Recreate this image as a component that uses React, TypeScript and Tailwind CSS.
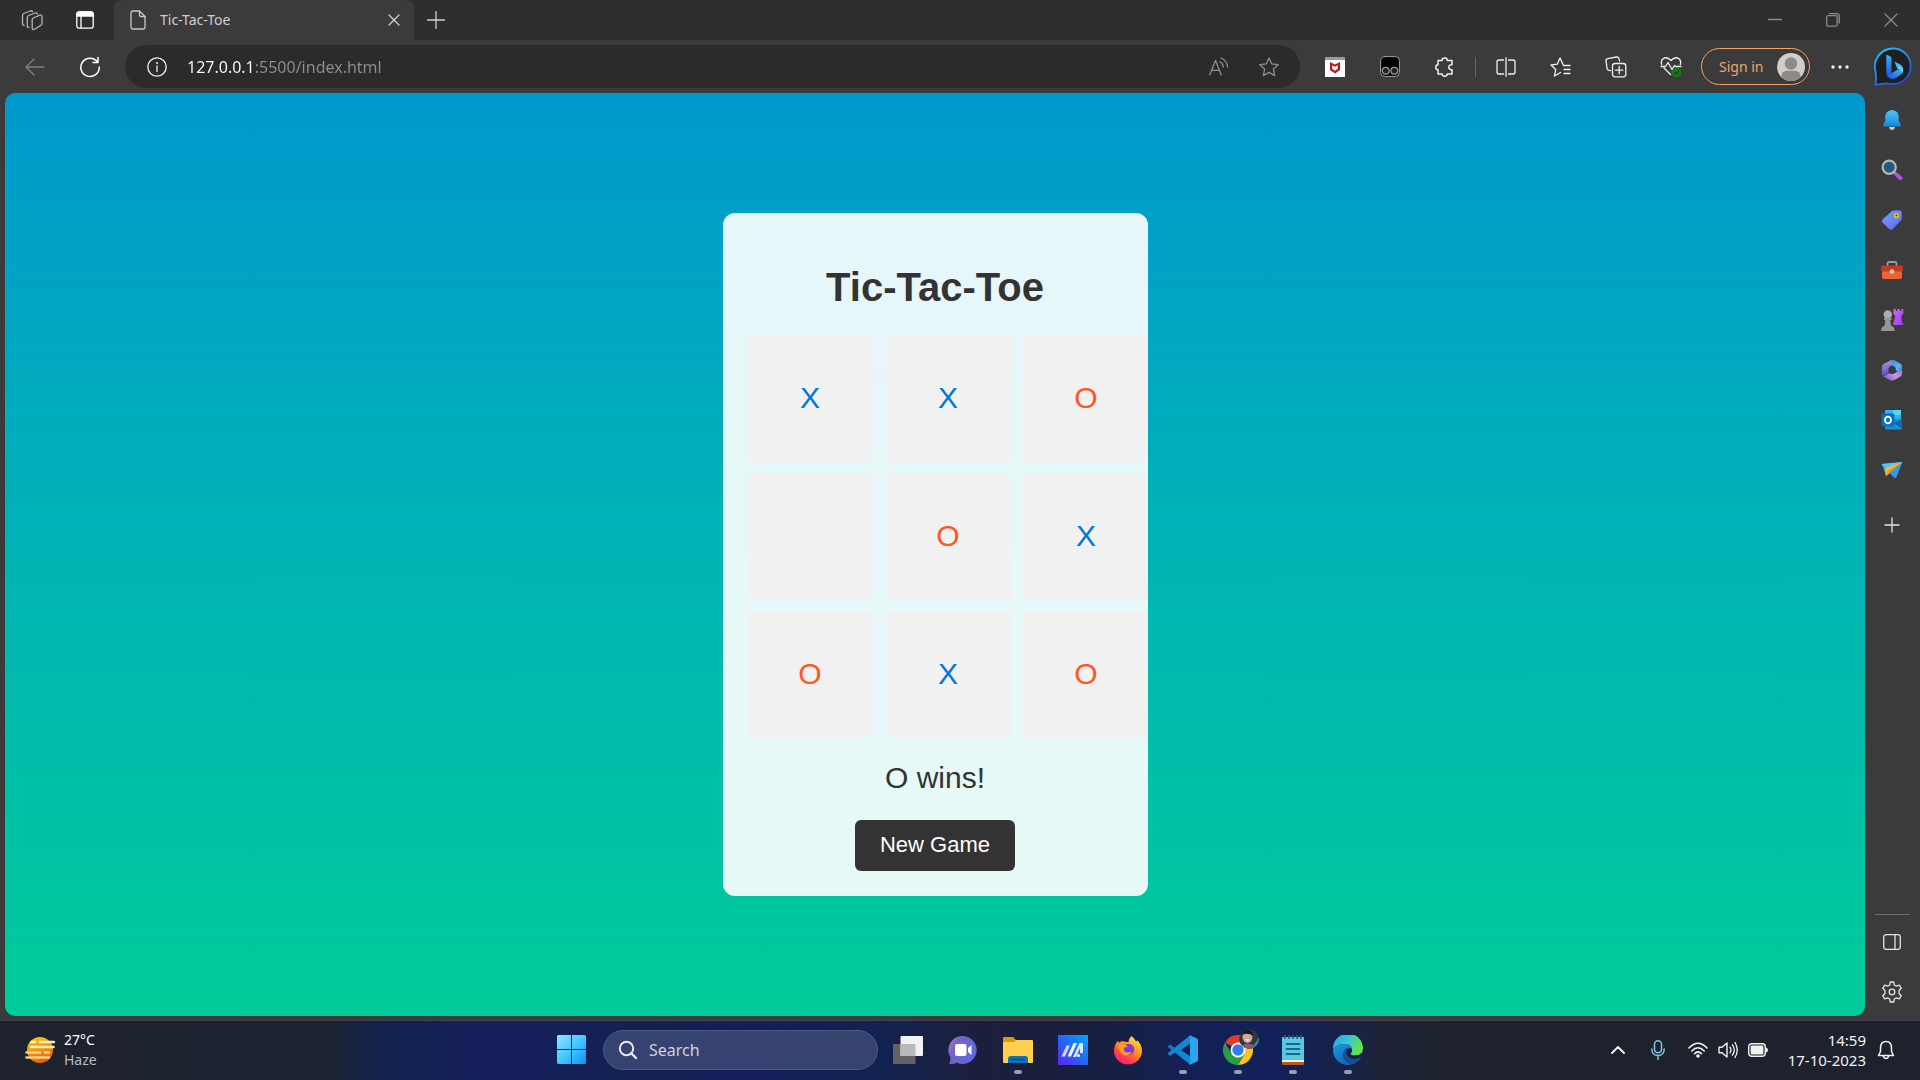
import { useState } from "react";
import type { ReactNode } from "react";

type Mark = "X" | "O" | "";

const LINES = [
  [0, 1, 2], [3, 4, 5], [6, 7, 8],
  [0, 3, 6], [1, 4, 7], [2, 5, 8],
  [0, 4, 8], [2, 4, 6],
];

const START: Mark[] = ["X", "X", "O", "", "O", "X", "O", "X", "O"];

function winnerOf(board: Mark[]): Mark {
  for (const [a, b, c] of LINES) {
    if (board[a] && board[a] === board[b] && board[a] === board[c]) return board[a];
  }
  return "";
}

type IconProps = { w?: number; h?: number; box?: string; children: ReactNode; className?: string };

function Icon({ w = 20, h = 20, box, children, className = "" }: IconProps) {
  return (
    <svg
      width={w}
      height={h}
      viewBox={box ?? `0 0 ${w} ${h}`}
      fill="none"
      stroke="currentColor"
      strokeWidth="1.3"
      strokeLinecap="round"
      strokeLinejoin="round"
      aria-hidden="true"
      className={`block shrink-0 ${className}`}
    >
      {children}
    </svg>
  );
}

function ToolButton({ label, children, className = "" }: { label: string; children: ReactNode; className?: string }) {
  return (
    <button type="button" aria-label={label} className={`flex h-10 w-[55px] shrink-0 items-center justify-center ${className}`}>
      {children}
    </button>
  );
}

/* ---------- Browser title bar ---------- */

function TitleBar() {
  return (
    <header className="flex h-10 items-stretch bg-[#2e2e2e] text-[#d0d0d0]">
      <div className="flex w-[114px] shrink-0 items-center">
        <button type="button" aria-label="Workspaces" className="flex h-full w-16 items-center justify-center text-[#b4b4b4]">
          <Icon w={22} h={22}>
            <path d="M12.200 9 19 6.200Q21 5.600 21 7.600V14.500Q21 15.700 20 16.200L13.500 20.200Q11.200 21.300 11.200 19.200V10.800Q11.200 9.500 12.200 9Z" />
            <path d="M8 18.200Q6.300 18.800 6.300 17V8.500Q6.300 7 7.500 6.500L14 4Q16 3.400 16.500 5" />
            <path d="M3.200 16.400Q1.500 16.400 1.500 14.800V6.500Q1.500 5 2.800 4.500L9 2Q11 1.300 11.500 2.700" />
          </Icon>
        </button>
        <button type="button" aria-label="Tab actions menu" className="flex h-full w-[42px] items-center justify-center text-white">
          <Icon w={18} h={18}>
            <rect x="0.800" y="0.800" width="16.400" height="16.400" rx="2.500" />
            <path d="M1 5V3Q1 1 3 1H15Q17 1 17 3V5Z" fill="currentColor" />
            <path d="M5 5V17" />
          </Icon>
        </button>
      </div>
      <div className="flex w-[300px] shrink-0 items-center rounded-t-lg bg-[#3b3b3b] pr-2 pl-4">
        <Icon w={16} h={20} className="text-[#c9c9c9]">
          <path d="M1 3Q1 1 3 1H9.500L15 6.500V17Q15 19 13 19H3Q1 19 1 17Z" />
          <path d="M9.500 1V5Q9.500 6.500 11 6.500H15" />
        </Icon>
        <span className="ml-[14px] flex-1 text-[14px] leading-5 text-[#cfcfcf]">Tic-Tac-Toe</span>
        <button type="button" aria-label="Close tab" className="flex h-6 w-6 items-center justify-center">
          <Icon w={12} h={12}>
            <path d="M1 1 11 11M11 1 1 11" />
          </Icon>
        </button>
      </div>
      <button type="button" aria-label="New tab" className="flex w-[43px] items-center justify-center">
        <Icon w={18} h={18}>
          <path d="M9 0.500V17.500M0.500 9H17.500" />
        </Icon>
      </button>
      <div className="flex flex-1 justify-end text-[#8a8a8a]">
        <button type="button" aria-label="Minimize" className="flex w-[58px] items-center justify-center">
          <Icon w={14} h={14}><path d="M0.500 6.500H13.500" /></Icon>
        </button>
        <button type="button" aria-label="Restore" className="flex w-[58px] items-center justify-center">
          <Icon w={14} h={14}>
            <rect x="0.700" y="2.700" width="10.500" height="10.500" rx="1.500" />
            <path d="M3.500 0.700H10.500Q13.300 0.700 13.300 3.500V10" />
          </Icon>
        </button>
        <button type="button" aria-label="Close" className="flex w-[58px] items-center justify-center">
          <Icon w={14} h={14}><path d="M1 1 13 13M13 1 1 13" /></Icon>
        </button>
      </div>
    </header>
  );
}

/* ---------- Browser toolbar ---------- */

function BingLogo() {
  return (
    <Icon w={38} h={40}>
      <defs>
        <linearGradient id="bingRing" x1="0" y1="0" x2="0.600" y2="1">
          <stop offset="0" stopColor="#25c9f2" />
          <stop offset="0.500" stopColor="#2a8cf0" />
          <stop offset="1" stopColor="#2050d8" />
        </linearGradient>
        <linearGradient id="bingStem" x1="0" y1="0" x2="0" y2="1">
          <stop offset="0" stopColor="#38b4f4" />
          <stop offset="1" stopColor="#2450e4" />
        </linearGradient>
        <linearGradient id="bingBowl" x1="0" y1="0" x2="1" y2="1">
          <stop offset="0" stopColor="#2ea4f4" />
          <stop offset="1" stopColor="#5ff0e0" />
        </linearGradient>
        <linearGradient id="bingBase" x1="0" y1="1" x2="1" y2="0">
          <stop offset="0" stopColor="#2450e4" />
          <stop offset="1" stopColor="#3ab4f8" />
        </linearGradient>
      </defs>
      <path d="M19 1.500C28.800 1.500 36.700 9.300 36.700 19.200S28.800 37 19 37C15.500 37 12 36 9.500 36.600C6.500 37.200 4 37.600 1.300 37.600C2.500 34 2 29 1.600 24.500A18 18 0 0 1 19 1.500Z" fill="#1f1f22" stroke="url(#bingRing)" strokeWidth="1.800" />
      <path d="M12.300 7.500 16.500 9.500Q17.500 10 17.500 11.500V25.500L14 29.500Q12.300 28.500 12.300 26.500Z" fill="url(#bingStem)" stroke="none" />
      <path d="M20.300 14.500 25.500 17Q29.800 19.500 29 24Q28.500 26 28 26.500Q27.500 23.500 23.500 22L20.300 14.500Z" fill="url(#bingBowl)" stroke="none" />
      <path d="M13.300 29 23.500 22.500Q28.500 23.500 28 26.500Q24 30.200 19.500 31.800Q15.500 32.500 13.300 29Z" fill="url(#bingBase)" stroke="none" />
    </Icon>
  );
}

function Toolbar() {
  return (
    <nav aria-label="Browser toolbar" className="flex h-[53px] items-center bg-[#3b3b3b] pl-[7px] text-[#f0f0f0]">
      <ToolButton label="Back" className="text-[#808080]">
        <Icon w={20} h={18}><path d="M19 9H1M9 1 1 9 9 17" /></Icon>
      </ToolButton>
      <ToolButton label="Refresh">
        <Icon w={22} h={22} className="text-white">
          <path d="M18.500 6A9.200 9.200 0 1 0 20.200 11" strokeWidth="1.500" />
          <path d="M19 1.500V6.500H14" strokeWidth="1.500" />
        </Icon>
      </ToolButton>
      <div className="ml-2 flex h-[43px] min-w-0 flex-1 items-center rounded-full bg-[#2b2b2b] pr-[21px] pl-[22px]">
        <button type="button" aria-label="View site information">
          <Icon w={20} h={20}>
            <circle cx="10" cy="10" r="9.200" />
            <path d="M10 9V14.500" />
            <circle cx="10" cy="6" r="0.700" fill="currentColor" strokeWidth="0.600" />
          </Icon>
        </button>
        <input
          type="text"
          aria-label="Address"
          defaultValue="127.0.0.1:5500/index.html"
          className="ml-5 h-7 min-w-0 flex-1 bg-[linear-gradient(90deg,#ffffff_67px,#8f8f8f_67px)] bg-clip-text text-[16px] text-transparent outline-none"
        />
        <button type="button" aria-label="Read aloud" className="text-[#8e8e8e]">
          <Icon w={20} h={20}>
            <path d="M0.700 18 6.500 3.500 12.300 18M2.700 13.300H10.300" />
            <path d="M11 4.500Q14 6.500 14.300 10M12 1Q18 3.500 18.700 10" />
          </Icon>
        </button>
        <button type="button" aria-label="Add to favorites" className="ml-[30px] text-[#8e8e8e]">
          <Icon w={20} h={20}>
            <path d="M10 1 12.700 6.900 19.200 7.700 14.400 12.100 15.700 18.600 10 15.400 4.300 18.600 5.600 12.100 0.800 7.700 7.300 6.900Z" />
          </Icon>
        </button>
      </div>
      <ToolButton label="McAfee" className="ml-[7px]">
        <Icon w={20} h={20}>
          <rect width="20" height="20" fill="#fff" stroke="none" />
          <rect width="20" height="3" fill="#9c9c9c" stroke="none" />
          <path d="M5 5 10 7.500 15 5V13L10 16.500 5 13ZM7.200 8.300V11.800L10 13.700 12.800 11.800V8.300L10 9.700Z" fill="#c3161c" fillRule="evenodd" stroke="none" />
        </Icon>
      </ToolButton>
      <ToolButton label="Tampermonkey">
        <Icon w={20} h={21}>
          <rect x="0.600" y="0.600" width="18.800" height="19.800" rx="4" fill="#000" stroke="#a0a0a0" strokeWidth="1" />
          <circle cx="5.700" cy="14.800" r="3.400" fill="#222" stroke="#999" />
          <circle cx="14.300" cy="14.800" r="3.400" fill="#222" stroke="#999" />
        </Icon>
      </ToolButton>
      <ToolButton label="Extensions">
        <Icon w={20} h={20}>
          <path d="M3 3.500H7.200Q7 1 9.700 1T12.200 3.500H17V7.700Q13.800 7.500 13.800 10.200T17 12.700V17H12.200Q12.200 19.300 9.700 19.300T7.200 17H3V12.700Q0.800 12.700 0.800 10.200T3 7.700Z" strokeWidth="1.500" />
        </Icon>
      </ToolButton>
      <span className="mr-0.5 ml-[3px] h-5 w-px shrink-0 bg-[#666]" />
      <ToolButton label="Split screen">
        <Icon w={20} h={20}>
          <path d="M7.500 3H3Q1 3 1 5V15Q1 17 3 17H7.500M12.500 3H17Q19 3 19 5V15Q19 17 17 17H12.500M10 0.700V19.300" />
        </Icon>
      </ToolButton>
      <ToolButton label="Favorites">
        <Icon w={21} h={20}>
          <path d="M20 8.500H13.500L10 1 7.300 7.200 1 8 5.700 12.500 4.500 19 10.500 15.500M14 12.500H20M14 16.500H20" />
        </Icon>
      </ToolButton>
      <ToolButton label="Collections">
        <Icon w={22} h={22}>
          <path d="M5.500 14.700 3.500 14.200Q2 13.500 2 12L1 5Q0.800 3 2.700 2.600L11.500 1Q13.500 0.800 14 2.700L14.600 5" />
          <rect x="7.500" y="7.500" width="13.300" height="13.300" rx="2.500" />
          <path d="M14.200 10.500V17.800M10.500 14.200H17.800" />
        </Icon>
      </ToolButton>
      <ToolButton label="Browser essentials">
        <Icon w={22} h={22}>
          <path d="M1.700 8.500Q0.500 5 3 2.800Q7 0 11 4.500Q15 0 19 2.800Q21.500 5 20.300 8.500M4 12 10.500 18.500M1 10.500H5.500L8 6.500 12 13.500 14.500 9.500 15.500 10.500H21" />
          <circle cx="16.500" cy="16.500" r="4.800" fill="#107c10" stroke="none" />
          <path d="M14.500 16.600 16 18 18.600 15.200" stroke="#1f3d1f" />
        </Icon>
      </ToolButton>
      <button type="button" className="ml-[3px] flex h-[37px] w-[109px] shrink-0 items-center justify-between rounded-full border border-[#f0a36b] pr-1 pl-[17px] text-[#f0a36b]">
        <span className="text-[14px] leading-5 whitespace-nowrap">Sign in</span>
        <Icon w={28} h={28}>
          <circle cx="14" cy="14" r="14" fill="#d0cecb" stroke="none" />
          <circle cx="14" cy="10.500" r="6.200" fill="#8e8a86" stroke="none" />
          <path d="M4.200 24Q5 17.800 10 17.800H18Q23 17.800 23.800 24A14 14 0 0 1 4.200 24Z" fill="#8e8a86" stroke="none" />
        </Icon>
      </button>
      <ToolButton label="Settings and more" className="pl-[5px]">
        <Icon w={18} h={4}>
          <circle cx="2" cy="2" r="1.700" fill="currentColor" stroke="none" />
          <circle cx="9" cy="2" r="1.700" fill="currentColor" stroke="none" />
          <circle cx="16" cy="2" r="1.700" fill="currentColor" stroke="none" />
        </Icon>
      </ToolButton>
      <ToolButton label="Bing Chat"><BingLogo /></ToolButton>
    </nav>
  );
}

/* ---------- Game ---------- */

function Game() {
  const [board, setBoard] = useState<Mark[]>(START);
  const winner = winnerOf(board);
  const turn: Mark = board.filter(Boolean).length % 2 === 0 ? "O" : "X";
  const status = winner ? `${winner} wins!` : board.every(Boolean) ? "Draw!" : `${turn}'s turn`;

  const play = (i: number) => {
    if (winner || board[i]) return;
    setBoard(board.map((m, k) => (k === i ? turn : m)));
  };

  return (
    <main className="mb-1 flex flex-1 items-center justify-center overflow-hidden rounded-[10px] bg-linear-to-b from-[#0099cc] to-[#00cc99] font-['Liberation_Sans',Arial,sans-serif]">
      <section className="flex w-[425px] flex-col items-center overflow-hidden rounded-xl bg-white/90 px-[25px] pt-[51px] pb-[25px] text-[#333]">
        <h1 className="text-[40px] leading-[46px] font-bold">Tic-Tac-Toe</h1>
        <div className="mt-[26px] grid grid-cols-[repeat(3,125px)] gap-[13px] self-start">
          {board.map((mark, i) => (
            <button
              key={i}
              type="button"
              aria-label={`Cell ${i + 1} ${mark}`}
              onClick={() => play(i)}
              className={`flex h-[125px] items-center justify-center bg-[#f1f1f1] pb-0.5 text-[30px] leading-[34px] ${mark === "X" ? "text-[#0078d4]" : "text-[#ff5722]"}`}
            >
              {mark}
            </button>
          ))}
        </div>
        <p className="mt-6 text-[30px] leading-[34px]" role="status">{status}</p>
        <button
          type="button"
          onClick={() => setBoard(Array<Mark>(9).fill(""))}
          className="mt-[25px] h-[51px] rounded-md bg-[#333] px-[25px] pb-0.5 text-[22px] leading-[26px] whitespace-nowrap text-white"
        >
          New Game
        </button>
      </section>
    </main>
  );
}

/* ---------- Edge sidebar ---------- */

function SideButton({ label, children }: { label: string; children: ReactNode }) {
  return (
    <button type="button" aria-label={label} className="flex h-[50px] w-full items-center justify-center">
      {children}
    </button>
  );
}

function Sidebar() {
  return (
    <aside aria-label="Sidebar" className="flex w-[55px] shrink-0 flex-col items-center pt-0.5 pr-px pb-[3px] text-[#e4e4e4]">
      <SideButton label="Notifications">
        <Icon w={22} h={22}>
          <defs>
            <linearGradient id="bell" x1="0" y1="0" x2="0" y2="1"><stop offset="0" stopColor="#4cc6fa" /><stop offset="1" stopColor="#1687d9" /></linearGradient>
          </defs>
          <path d="M8 18H14Q13.500 21 11 21T8 18Z" fill="#c8c8c8" stroke="none" />
          <path d="M11 1Q17.500 1.500 17.800 8V12L20 16Q20 17.500 18.500 17.500H3.500Q2 17.500 2 16L4.200 12V8Q4.500 1.500 11 1Z" fill="url(#bell)" stroke="none" />
        </Icon>
      </SideButton>
      <SideButton label="Search">
        <Icon w={22} h={22}>
          <path d="M12.500 12.500 15.500 15.500" stroke="#999" strokeWidth="2.500" />
          <path d="M15.500 15.500 19.500 19.200" stroke="#b34cf0" strokeWidth="4" />
          <circle cx="8.200" cy="8.200" r="6.600" fill="#245b7c" stroke="#b5b5b5" strokeWidth="2.200" />
        </Icon>
      </SideButton>
      <SideButton label="Shopping">
        <Icon w={22} h={22}>
          <defs>
            <linearGradient id="tag" x1="0" y1="0" x2="1" y2="1"><stop offset="0" stopColor="#74a5ff" /><stop offset="1" stopColor="#5d68e8" /></linearGradient>
          </defs>
          <path d="M12.500 1.500H19Q20.800 1.500 20.800 3.500V9.500Q20.800 10.500 20 11.300L11.500 20.300Q10 21.700 8.500 20.300L1.500 13.500Q0.300 12 1.600 10.500L10.500 2.400Q11.300 1.500 12.500 1.500Z" fill="url(#tag)" stroke="none" />
          <circle cx="15.500" cy="6.500" r="1.800" fill="#333" stroke="#fdc600" strokeWidth="1.600" />
        </Icon>
      </SideButton>
      <SideButton label="Tools">
        <Icon w={24} h={22}>
          <path d="M7.500 7V4.500Q7.500 3 9 3H15Q16.500 3 16.500 4.500V7" stroke="#9b9b9b" strokeWidth="1.800" />
          <path d="M2 11H22V18Q22 20 20 20H4Q2 20 2 18Z" fill="#ee6237" stroke="none" />
          <path d="M2.500 6.500H21.500Q23 6.500 23 8V10Q23 12.500 20.500 12.500H3.500Q1 12.500 1 10V8Q1 6.500 2.500 6.500Z" fill="#c63d1c" stroke="none" />
          <circle cx="12" cy="12.500" r="2.300" fill="#c9c9c9" stroke="none" />
        </Icon>
      </SideButton>
      <SideButton label="Games">
        <Icon w={24} h={24}>
          <defs>
            <linearGradient id="rook" x1="0" y1="0" x2="1" y2="1"><stop offset="0" stopColor="#d56bff" /><stop offset="1" stopColor="#9a35e8" /></linearGradient>
          </defs>
          <path d="M13.500 1H15.800V3H17.300V1H19.700V3H21.200V1H23.300V6L21.300 8 22 13.500 23.500 17H13L15.300 8 13.500 6Z" fill="url(#rook)" stroke="none" />
          <circle cx="7.800" cy="6.500" r="4.200" fill="#adadad" stroke="none" />
          <path d="M4 10H11.600V12H10.300L11 17.500Q14.700 19 14.700 22.500V23H1V22.500Q1 19 4.600 17.500L5.300 12H4Z" fill="#969696" stroke="none" />
        </Icon>
      </SideButton>
      <SideButton label="Microsoft 365">
        <Icon w={22} h={22}>
          <defs>
            <linearGradient id="mLeft" x1="0.300" y1="0" x2="0.500" y2="1"><stop offset="0" stopColor="#b09be8" /><stop offset="1" stopColor="#4a53b0" /></linearGradient>
            <linearGradient id="mRight" x1="0" y1="0" x2="1" y2="1"><stop offset="0" stopColor="#3f86d8" /><stop offset="0.600" stopColor="#56b8ec" /><stop offset="1" stopColor="#2f6cc0" /></linearGradient>
            <linearGradient id="mBase" x1="0" y1="0.500" x2="1" y2="0"><stop offset="0" stopColor="#7d64c0" /><stop offset="0.500" stopColor="#c79ae0" /><stop offset="1" stopColor="#8a78d0" /></linearGradient>
          </defs>
          <path d="M11 0.700 3 4.800Q0.800 6 0.800 8.500V14.500Q0.800 17.500 3.500 16.500L7.700 14V9.500Q7.700 8 9 7.200L12.500 5Z" fill="url(#mLeft)" stroke="none" />
          <path d="M11 0.700Q12 0.500 13 1L19.500 4.700Q21.200 5.800 21.200 8V13Q20.500 15 18.500 13.500L14.500 11V9.500Q14.500 8 13.300 7.300L10 6.500Q12.500 4 11 0.700Z" fill="url(#mRight)" stroke="none" />
          <path d="M1.500 16.800Q4 17.500 7.700 14.500L10.500 15Q11.500 15.500 12.800 14.700L18 11.500Q20.500 10.500 21.200 13V14.500Q21.200 16.500 19.500 17.500L13 21.200Q11 22 9.200 21.200L3 18Q2 17.500 1.500 16.800Z" fill="url(#mBase)" stroke="none" />
          <path d="M11.100 7.200 14.500 9.200V13L11.100 15 7.700 13V9.200Z" fill="#38384a" stroke="none" />
        </Icon>
      </SideButton>
      <SideButton label="Outlook">
        <Icon w={22} h={22}>
          <path d="M4 1H20V12H4Z" fill="#34b5ea" stroke="none" />
          <path d="M12 1H20V6H12Z" fill="#52d6f5" stroke="none" />
          <path d="M4 10 21 9.500V19Q21 20.500 19.500 20.500H5.500Q4 20.500 4 19Z" fill="#1c8fd8" stroke="none" />
          <path d="M21 10V19.500L13 14Z" fill="#1265a6" stroke="none" />
          <rect x="0.500" y="4.500" width="13" height="13" rx="1.500" fill="#0a6fc2" stroke="none" />
          <ellipse cx="7" cy="11" rx="3" ry="3.400" stroke="#fff" strokeWidth="1.900" />
        </Icon>
      </SideButton>
      <SideButton label="Drop">
        <Icon w={22} h={20}>
          <path d="M0.500 4 21.500 2 15.500 17Q14.500 18.500 13 17.500L9 13.500 5 15.500Z" fill="#3a96ea" stroke="none" />
          <path d="M0.500 4 21.500 2 7 10.500Z" fill="#55c6f7" stroke="none" />
          <path d="M4 8.500 21.500 2 9 11.500 5 16.500Z" fill="#ffc21a" stroke="none" />
          <path d="M5 16.500 6.500 10 21.500 2 9 12Z" fill="#f59c12" stroke="none" />
        </Icon>
      </SideButton>
      <button type="button" aria-label="Customize sidebar" className="mt-2 flex h-11 w-full items-center justify-center">
        <Icon w={16} h={16}><path d="M8 1V15M1 8H15" /></Icon>
      </button>
      <span className="mt-auto h-px w-[35px] bg-[#6c6c6c]" />
      <button type="button" aria-label="Hide sidebar" className="mt-0.5 flex h-[50px] w-full items-center justify-center">
        <Icon w={18} h={16}>
          <rect x="0.700" y="0.700" width="16.600" height="14.600" rx="2.500" />
          <path d="M12 1V15" />
        </Icon>
      </button>
      <SideButton label="Sidebar settings">
        <Icon w={22} h={22}>
          <path d="M9.300 1H12.700L13.300 4 15.300 5.200 18.300 4.200 20.200 7.200 18 9.500V12.500L20.200 14.800 18.300 17.800 15.300 16.800 13.300 18 12.700 21H9.300L8.700 18 6.700 16.800 3.700 17.800 1.800 14.800 4 12.500V9.500L1.800 7.200 3.700 4.200 6.700 5.200 8.700 4Z" />
          <circle cx="11" cy="11" r="2.800" />
        </Icon>
      </SideButton>
    </aside>
  );
}

/* ---------- Windows taskbar ---------- */

function TaskApp({ label, running, children }: { label: string; running?: boolean; children: ReactNode }) {
  return (
    <button type="button" aria-label={label} className="relative flex h-full w-[55px] shrink-0 items-center justify-center">
      {children}
      {running && <span className="absolute bottom-1 left-1/2 h-1 w-2 -translate-x-1/2 rounded-full bg-[#9a9db0]" />}
    </button>
  );
}

function TaskIcons() {
  return (
    <>
      <TaskApp label="Task view">
        <Icon w={30} h={28}>
          <rect x="0" y="8" width="22.500" height="20" rx="1" fill="#636363" stroke="none" />
          <rect x="7.500" y="0" width="22.500" height="20" rx="1" fill="#f2f2f2" stroke="none" />
          <rect x="7.500" y="8" width="15" height="12" fill="#bababa" stroke="none" />
        </Icon>
      </TaskApp>
      <TaskApp label="Chat">
        <Icon w={30} h={30}>
          <defs>
            <linearGradient id="chat" x1="0" y1="0" x2="1" y2="0.600"><stop offset="0" stopColor="#b47bb0" /><stop offset="0.350" stopColor="#7862c8" /><stop offset="1" stopColor="#5b6ae0" /></linearGradient>
          </defs>
          <path d="M15 1A14 14 0 1 1 9 27.800Q6 29.300 1 29Q3 26 2.300 22A14 14 0 0 1 15 1Z" fill="url(#chat)" stroke="none" />
          <rect x="7" y="9" width="11.500" height="12" rx="2" fill="#fff" stroke="none" />
          <path d="M20 13 23.500 10V20L20 17Z" fill="#fff" stroke="none" />
        </Icon>
      </TaskApp>
      <TaskApp label="File Explorer" running>
        <Icon w={30} h={28}>
          <path d="M0 2Q0 1 1 1H10L13 4H29V10H0Z" fill="#d99a0b" stroke="none" />
          <path d="M0 7Q0 6 1 6H11L13 4H29Q30 4 30 5V26Q30 27 29 27H1Q0 27 0 26Z" fill="#fdd04f" stroke="none" />
          <path d="M5 23Q5 20 8 20H22Q25 20 25 23V27H5Z" fill="#1073b8" stroke="none" />
          <path d="M9 23.500H21" stroke="#0a4c80" strokeWidth="1.500" />
        </Icon>
      </TaskApp>
      <TaskApp label="MyASUS">
        <Icon w={30} h={30}>
          <defs>
            <linearGradient id="asus" x1="0" y1="1" x2="1" y2="0"><stop offset="0" stopColor="#6022f0" /><stop offset="0.500" stopColor="#2266fa" /><stop offset="1" stopColor="#00a8ff" /></linearGradient>
          </defs>
          <rect width="30" height="30" fill="url(#asus)" stroke="none" />
          <path d="M3.500 21.500 8.500 10.500H12L7 21.500Z" fill="#cdd8ff" stroke="none" />
          <path d="M9.500 21.500 15.500 8H19L13 21.500Z" fill="#eef2ff" stroke="none" />
          <path d="M15 22 21.500 8H25V18H22V13L18 22Z" fill="#dfe6ff" stroke="none" />
          <circle cx="20.500" cy="20.500" r="1.500" fill="#fff" stroke="none" />
        </Icon>
      </TaskApp>
      <TaskApp label="Firefox">
        <Icon w={30} h={30}>
          <defs>
            <linearGradient id="fox" x1="0.800" y1="0" x2="0.200" y2="1"><stop offset="0" stopColor="#ffe53b" /><stop offset="0.450" stopColor="#ff8c1f" /><stop offset="0.750" stopColor="#ff3b4d" /><stop offset="1" stopColor="#e3238b" /></linearGradient>
          </defs>
          <path d="M18.500 1Q21.500 3 23 6.500Q24.500 6 24 5Q29 9.500 29 16A14 13.300 0 0 1 1 16Q1 10 5 5.500Q5 7 6 7.500Q9 5.500 11.500 6.500Q14 7 15.500 7Q16 3 18.500 1Z" fill="url(#fox)" stroke="none" />
          <circle cx="15.500" cy="14.500" r="5.800" fill="#8338d8" stroke="none" />
          <path d="M4.500 10Q9 7.500 15 11Q13.500 12.500 11 12.800Q10 17 14.500 17.500Q17 17.800 18.500 16.500Q17.500 20.500 13 20.500Q7 20 4.500 10Z" fill="#ff9a2b" stroke="none" />
        </Icon>
      </TaskApp>
      <TaskApp label="Visual Studio Code" running>
        <Icon w={30} h={30}>
          <path d="M22 0.500 7.500 13.500 3 10Q2 9.500 1 10.200L0.300 11Q-0.300 12 0.500 12.800L22 29.500V21L10.500 15 22 8Z" fill="#0e79c2" stroke="none" />
          <path d="M22 29.500 7.500 17 3 20.300Q2 21 1 20.200L0.300 19.300Q-0.300 18.300 0.500 17.500L22 0.500V8.500L13 15 22 21.500Z" fill="#1287d2" stroke="none" />
          <path d="M22 0.300 29 3.500Q30 4 30 5V25Q30 26 29 26.500L22 29.800Q20.500 29.500 22 28V2Q21 1 22 0.300Z" fill="#2ba4f1" stroke="none" />
        </Icon>
      </TaskApp>
      <TaskApp label="Google Chrome" running>
        <Icon w={30} h={30}>
          <path d="M15 15 2 7.500A15 15 0 0 1 28 7.500H15Z" fill="#e33b2e" stroke="none" />
          <path d="M15 15 28 7.500A15 15 0 0 1 15 30L21.500 18.700Z" fill="#fcc31e" stroke="none" />
          <path d="M15 15 21.500 18.700 15 30A15 15 0 0 1 2 7.500L8.500 18.700Z" fill="#2b9c48" stroke="none" />
          <path d="M15 7.500H28V15H22Z" fill="#fcc31e" stroke="none" />
          <circle cx="15" cy="15" r="7.500" fill="#fff" stroke="none" />
          <circle cx="15" cy="15" r="5.700" fill="#2f7de9" stroke="none" />
        </Icon>
        <span className="absolute top-2 -right-px overflow-hidden rounded-full">
          <Icon w={20} h={20} className="mr-[7px] rounded-full">
            <rect width="20" height="20" fill="#33363f" stroke="none" />
            <path d="M20 8V20H8Q15 18 20 8Z" fill="#2d8c91" stroke="none" />
            <ellipse cx="8.500" cy="8" rx="5" ry="6" fill="#d3a69c" stroke="none" />
            <path d="M3 6Q4 0 10 1Q14 2 14 7Q9 3 3 6Z" fill="#1c1a20" stroke="none" />
            <path d="M1 18Q7 12 14 16V20H1Z" fill="#8a5878" stroke="none" />
            <path d="M6 10.500Q8.500 13 11 10.500Z" fill="#fff" stroke="none" />
          </Icon>
        </span>
      </TaskApp>
      <TaskApp label="Notepad" running>
        <Icon w={22} h={30}>
          <rect x="0" y="24" width="22" height="6" rx="1" fill="#b05a1c" stroke="none" />
          <rect x="0" y="24" width="22" height="3" fill="#f2f2f2" stroke="none" />
          <path d="M0 3Q0 2 1 2H21Q22 2 22 3V25H0Z" fill="#5cc8e0" stroke="none" />
          <path d="M3 0.500V3M7 0.500V3M11 0.500V3M15 0.500V3M19 0.500V3" stroke="#17607d" strokeWidth="1.800" />
          <path d="M4.500 9H17.500M4.500 14H17.500M4.500 19H17.500" stroke="#126a8c" strokeWidth="1.800" />
        </Icon>
      </TaskApp>
      <TaskApp label="Microsoft Edge" running>
        <Icon w={30} h={30}>
          <defs>
            <linearGradient id="edgeTop" x1="0" y1="0" x2="1" y2="0.400"><stop offset="0" stopColor="#2aa5e2" /><stop offset="0.500" stopColor="#33c4d8" /><stop offset="1" stopColor="#68e04c" /></linearGradient>
            <linearGradient id="edgeLeft" x1="0" y1="0" x2="0.500" y2="1"><stop offset="0" stopColor="#1b9ade" /><stop offset="1" stopColor="#1267bd" /></linearGradient>
          </defs>
          <circle cx="15" cy="15" r="15" fill="#15509f" stroke="none" />
          <path d="M0 14A15 15 0 0 1 30 13Q30 20.500 22 20.500Q17.500 20.500 17.500 18.500Q19.500 17 19 14Q18 9 11 9Q4 9 0 14Z" fill="url(#edgeTop)" stroke="none" />
          <path d="M0 15Q3 9 10.500 9Q17 9 19 13.500Q12 11 10 18Q9 26 18 29.700A15 15 0 0 1 0 15Z" fill="url(#edgeLeft)" stroke="none" />
          <path d="M19 14Q19 17 17.500 18.500Q17.500 20.500 22 20.500Q26 20.500 28.500 18L30 20 28.500 22Q23 25 18 23.500Q12 21.500 13.500 15.500Q16 12 19 14Z" fill="#1b2148" stroke="none" />
          <path d="M13.200 15.500Q12.500 21.500 18 23.500Q23 25 28 21.800Q25 27 19.500 29.300Q8 26 10.300 18Q11 16 13.200 15.500Z" fill="#145092" stroke="none" />
        </Icon>
      </TaskApp>
    </>
  );
}

function Taskbar() {
  return (
    <footer className="flex h-[60px] shrink-0 items-center justify-between border-t border-[#3d414b] bg-[linear-gradient(90deg,#1e222c_0%,#1b2231_17%,#12214e_20%,#151f5c_26%,#122250_35%,#151f5c_38%,#122250_46%,#1c1f3c_51%,#191f40_57%,#122058_63%,#13205a_67%,#1c2338_72%,#1e222c_76%,#1e222c_100%)] pb-0.5 text-white">
      <button type="button" aria-label="Weather: 27°C, Haze" className="flex w-[544px] items-center pl-[25px] text-left">
        <Icon w={30} h={28}>
          <defs>
            <linearGradient id="sun" x1="0" y1="0" x2="0.400" y2="1"><stop offset="0" stopColor="#ffcf0d" /><stop offset="1" stopColor="#e8650b" /></linearGradient>
          </defs>
          <circle cx="15" cy="14" r="13" fill="url(#sun)" stroke="none" />
          <path d="M6.500 6H10M15 6H29M6 11H28.500" stroke="#fff0c0" strokeWidth="2.600" />
          <path d="M1.500 16.500H15M20 16.500H24M1.500 21.500H24" stroke="#f0cf8a" strokeWidth="2.600" />
        </Icon>
        <span className="ml-[9px] text-[14px] leading-5">
          <span className="block">27°C</span>
          <span className="block text-[#b9bbc0]">Haze</span>
        </span>
      </button>
      <div className="flex h-full items-center">
        <TaskApp label="Start">
          <Icon w={29} h={29}>
            <defs>
              <linearGradient id="win" x1="0" y1="0" x2="1" y2="1"><stop offset="0" stopColor="#8ce4ff" /><stop offset="0.500" stopColor="#45c8ff" /><stop offset="1" stopColor="#0a92f5" /></linearGradient>
            </defs>
            <path d="M1 0H14V14H0V1ZM15 0H28L29 1V14H15ZM0 15H14V29H1L0 28ZM15 15H29V28L28 29H15Z" fill="url(#win)" stroke="none" />
          </Icon>
        </TaskApp>
        <label className="ml-1 flex h-10 w-[275px] items-center rounded-full border border-[#4d5a80] bg-[#364270] pl-[14px]">
          <Icon w={20} h={20} className="text-[#e8e8ee]">
            <circle cx="8.500" cy="8.500" r="6.700" strokeWidth="2" />
            <path d="M13.500 13.500 18 18" strokeWidth="2.400" />
          </Icon>
          <input type="search" aria-label="Search" placeholder="Search" className="ml-[11px] w-[200px] min-w-0 bg-transparent text-[16px] outline-none placeholder:text-[#cfd2dd]" />
        </label>
        <span className="w-0.5" />
        <TaskIcons />
      </div>
      <div className="flex w-[545px] items-center justify-end pr-[25px] text-[#f2f2f2]">
        <button type="button" aria-label="Show hidden icons">
          <Icon w={14} h={8}><path d="M1 7 7 1 13 7" strokeWidth="1.900" /></Icon>
        </button>
        <button type="button" aria-label="Microphone in use" className="ml-[26px] text-[#7cc8dc]">
          <Icon w={14} h={20}>
            <rect x="3.500" y="0.800" width="7" height="12" rx="3.500" strokeWidth="1.500" />
            <path d="M0.800 9Q1 15.500 7 15.500T13.200 9M7 15.500V19.300" strokeWidth="1.500" />
          </Icon>
        </button>
        <button type="button" aria-label="Network, volume and battery" className="ml-[23px] flex items-center gap-[10px]">
          <Icon w={20} h={16}>
            <path d="M1 6Q10-3.500 19 6M3.800 9Q10 2.500 16.200 9M6.500 11.700Q10 8 13.500 11.700" strokeWidth="1.600" />
            <circle cx="10" cy="14" r="1.800" fill="currentColor" stroke="none" />
          </Icon>
          <Icon w={20} h={18}>
            <path d="M1 6.200H4L9 2V16L4 11.800H1Z" strokeWidth="1.400" />
            <path d="M12 6.200Q14 9 12 11.800M14.500 3.800Q18 9 14.500 14.200M17 1.500Q21.500 9 17 16.500" />
          </Icon>
          <Icon w={20} h={14}>
            <rect x="0.700" y="0.700" width="16.600" height="12.600" rx="3" strokeWidth="1.400" />
            <rect x="2.600" y="2.600" width="12.800" height="8.800" rx="1" fill="currentColor" stroke="none" />
            <path d="M18 4.500Q20 5 20 7T18 9.500Z" fill="currentColor" stroke="none" />
          </Icon>
        </button>
        <button type="button" className="ml-5 text-right text-[15px] leading-5">
          <span className="block">14:59</span>
          <span className="block">17-10-2023</span>
        </button>
        <button type="button" aria-label="Notification center" className="ml-[11px]">
          <Icon w={18} h={20}>
            <path d="M9 1.500Q14.500 1.500 14.500 8V11.500L16.500 15.500H1.500L3.500 11.500V8Q3.500 1.500 9 1.500ZM6.300 16Q7 18.500 9 18.500T11.700 16" strokeWidth="1.500" />
          </Icon>
        </button>
      </div>
    </footer>
  );
}

export default function App() {
  return (
    <div className="flex min-h-screen flex-col bg-[#3b3b3b] font-['Noto_Sans','Open_Sans',sans-serif]">
      <TitleBar />
      <Toolbar />
      <div className="flex flex-1 pl-[5px]">
        <Game />
        <Sidebar />
      </div>
      <Taskbar />
    </div>
  );
}
